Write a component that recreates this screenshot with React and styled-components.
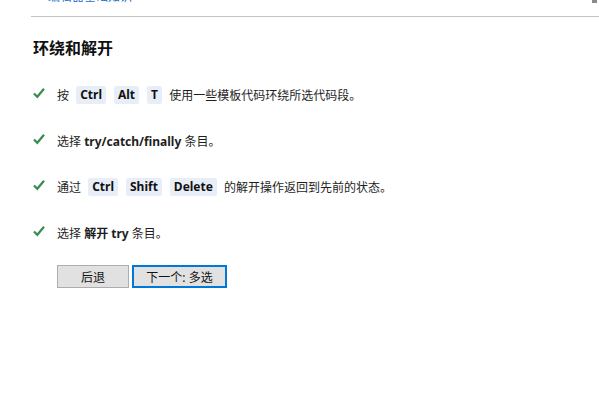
import React from "react";
import styled, { createGlobalStyle } from "styled-components";

const GlobalStyle = createGlobalStyle`
  html, body {
    margin: 0;
    padding: 0;
    background: #ffffff;
    overflow: hidden;
  }
  body {
    font-family: "Noto Sans", "Noto Sans CJK SC", sans-serif;
    color: #1e1e1e;
  }
`;

const Page = styled.div`
  position: relative;
  width: 599px;
  height: 403px;
  overflow: hidden;
`;

const ScrollThumb = styled.div`
  position: absolute;
  top: 0;
  right: 2px;
  width: 5px;
  height: 3px;
  background: #8a8a8a;
`;

const Content = styled.div`
  padding-left: 31px;
  margin-top: -11px;
`;

const BackLink = styled.a`
  display: block;
  padding-left: 2px;
  height: 16px;
  font-size: 12px;
  line-height: 16px;
  color: #1a6fc9;
  text-decoration: none;
`;

const Divider = styled.hr`
  margin: 11px 0 0;
  border: none;
  border-top: 1px solid #c4c4c4;
`;

const Title = styled.h2`
  margin: 20px 0 0 2px;
  font-size: 16px;
  line-height: 22px;
  font-weight: 700;
  color: #111;
`;

const Steps = styled.ul`
  list-style: none;
  margin: 25px 0 0 2px;
  padding: 0;
  display: flex;
  flex-direction: column;
  gap: 24px;
`;

const Step = styled.li`
  display: flex;
  align-items: center;
  gap: 12px;
  height: 22px;
  font-size: 12px;
`;

const Check = styled.svg`
  width: 12px;
  height: 12px;
  flex: none;
  margin-top: -4px;
`;

const StepText = styled.span`
  display: flex;
  align-items: center;
  white-space: pre;
`;

const Key = styled.kbd`
  font-family: inherit;
  font-weight: 700;
  font-size: 12px;
  background: #e8eef8;
  color: #111;
  border-radius: 2px;
  padding: 1px 4px;
  line-height: 16px;
  margin: 0 4px;
`;

const Strong = styled.b`
  font-weight: 700;
`;

const Buttons = styled.div`
  display: flex;
  gap: 3px;
  margin: 21px 0 0 26px;
`;

const Button = styled.button`
  font-family: inherit;
  font-size: 12px;
  height: 23px;
  width: ${(p) => p.$w}px;
  padding: 0;
  background: #e1e1e1;
  color: #111;
  border: ${(p) => (p.$focus ? "2px solid #0078d7" : "1px solid #adadad")};
`;

const CheckIcon = () => (
  <Check viewBox="0 0 12 12">
    <path d="M1 6.5 L4.3 9.8 L11 1.8" fill="none" stroke="#3b8a4e" strokeWidth="2.2" />
  </Check>
);

export default function App() {
  return (
    <Page>
      <GlobalStyle />
      <ScrollThumb />
      <Content>
        <BackLink href="#">← 编辑器基础知识</BackLink>
        <Divider />
        <Title>环绕和解开</Title>
        <Steps>
          <Step>
            <CheckIcon />
            <StepText>
              按 <Key>Ctrl</Key> <Key>Alt</Key> <Key>T</Key> 使用一些模板代码环绕所选代码段。
            </StepText>
          </Step>
          <Step>
            <CheckIcon />
            <StepText>
              选择 <Strong>try/catch/finally</Strong> 条目。
            </StepText>
          </Step>
          <Step>
            <CheckIcon />
            <StepText>
              通过 <Key>Ctrl</Key> <Key>Shift</Key> <Key>Delete</Key> 的解开操作返回到先前的状态。
            </StepText>
          </Step>
          <Step>
            <CheckIcon />
            <StepText>
              选择 <Strong>解开 try</Strong> 条目。
            </StepText>
          </Step>
        </Steps>
        <Buttons>
          <Button $w={72}>后退</Button>
          <Button $w={95} $focus>下一个: 多选</Button>
        </Buttons>
      </Content>
    </Page>
  );
}
